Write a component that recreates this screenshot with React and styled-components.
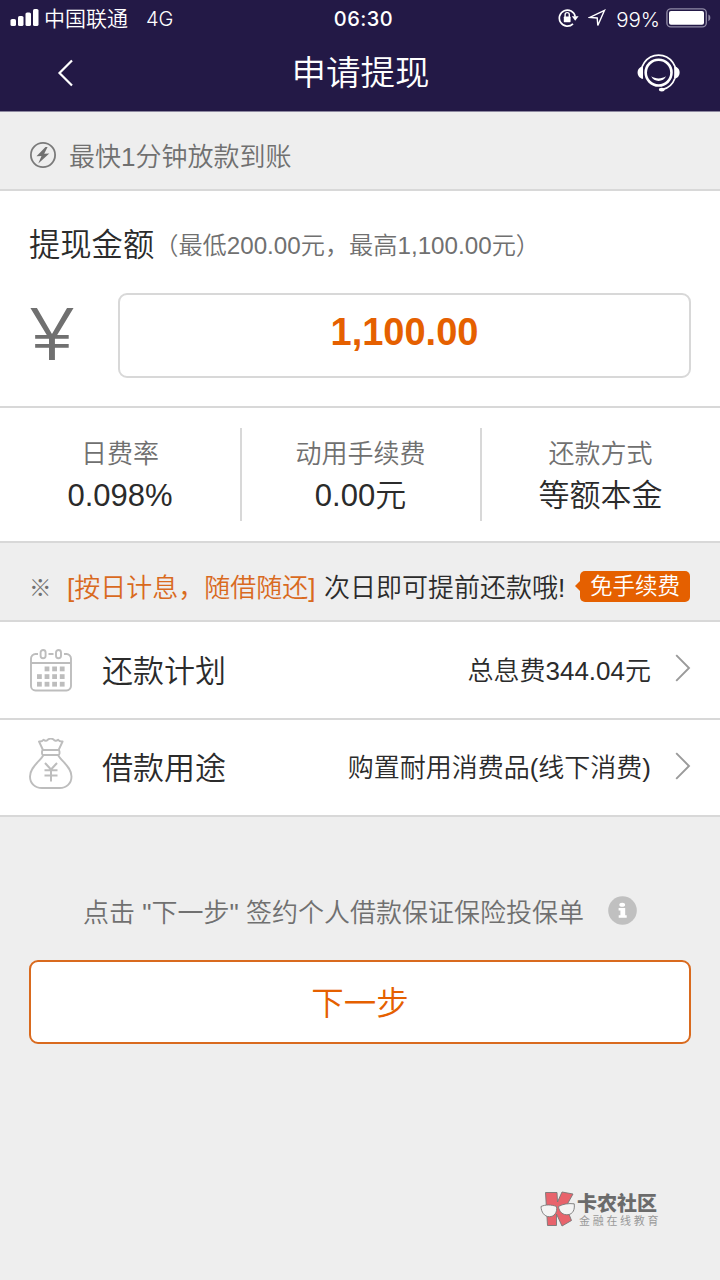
import React from 'react';
import styled, { createGlobalStyle } from 'styled-components';

const colors = {
    navy: '#231946',
    orange: '#e56000',
    orangeText: '#d96a1e',
    line: '#d8d8d8',
    bg: '#eeeeee',
    dark: '#2b2b2b',
    gray: '#707070',
    icon: '#bdbdbd'
};

const stats = [
    { label: '日费率', value: '0.098%' },
    { label: '动用手续费', value: '0.00元' },
    { label: '还款方式', value: '等额本金' }
];

const SignalIcon = () => (
    <svg width="29" height="18" viewBox="0 0 29 18" fill="#fff">
        <rect x="0.5" y="10" width="5.5" height="7" rx="1.6" />
        <rect x="8" y="7" width="5.5" height="10" rx="1.6" />
        <rect x="15.5" y="3.5" width="5.5" height="13.5" rx="1.6" />
        <rect x="23" y="0" width="5.5" height="17" rx="1.6" />
    </svg>
);

const LockIcon = () => (
    <svg width="21" height="20" viewBox="0 0 21 20" fill="none" stroke="#fff" strokeWidth="1.7">
        <path d="M15 15.8A8 8 0 1 1 17.2 8.6" />
        <path d="M13.8 8.2h6.8l-3.4 4.6z" fill="#fff" stroke="none" />
        <path d="M7.1 9V6.7a2.1 2.1 0 0 1 4.2 0V9" strokeWidth="1.4" />
        <rect x="5.8" y="8.6" width="6.8" height="5.6" rx="0.6" fill="#fff" stroke="none" />
    </svg>
);

const LocationIcon = () => (
    <svg width="18" height="18" viewBox="0 0 18 18" fill="none" stroke="#fff" strokeWidth="1.4">
        <path d="M16.5 1.3L1.8 8.4l7.4.6.6 7.5z" strokeLinejoin="miter" />
    </svg>
);

const BatteryIcon = () => (
    <svg width="46" height="20" viewBox="0 0 46 20" fill="none">
        <rect x="0.9" y="0.9" width="39.4" height="18" rx="4" stroke="#8f89a5" strokeWidth="1.4" />
        <rect x="3" y="3" width="35" height="13.8" rx="2" fill="#fff" />
        <path d="M42.4 6.6c2.6 1 2.6 5.6 0 6.6z" fill="#8f89a5" />
    </svg>
);

const BackIcon = () => (
    <svg width="16" height="28" viewBox="0 0 16 28" fill="none" stroke="#fff" strokeWidth="2.2">
        <path d="M15 1.5L2.5 14 15 26.5" />
    </svg>
);

const ServiceIcon = () => (
    <svg width="44" height="38" viewBox="0 0 44 38" fill="none" stroke="#fff">
        <circle cx="21.6" cy="18.6" r="12.9" strokeWidth="2.6" />
        <path d="M5.4 24.5A17.3 17.3 0 1 1 37.8 24.5" strokeWidth="1.7" />
        <path d="M37.8 24.5A17.3 17.3 0 0 1 26 35.4" strokeWidth="1.7" />
        <path d="M6 12.5v12.2C2.6 24.4.6 22 .6 18.6S2.6 12.8 6 12.5z" fill="#fff" stroke="none" />
        <path d="M37.2 12.5v12.2c3.4-.3 5.4-2.7 5.4-6.1s-2-5.800-5.400-6.100z" fill="#fff" stroke="none" />
        <path d="M14.2 22.3c4.4 2.8 10.4 2.8 14.8 0-1.2 3-4.2 4.6-7.4 4.6s-6.2-1.6-7.4-4.6z" fill="#fff" stroke="none" />
        <ellipse cx="24.8" cy="35.6" rx="2.9" ry="1.9" fill="#fff" stroke="none" />
    </svg>
);

const FlashIcon = () => (
    <svg width="26" height="26" viewBox="0 0 26 26">
        <circle cx="13" cy="13" r="12.1" fill="none" stroke="#7a7a7a" strokeWidth="1.8" />
        <path d="M15.5 5L6.5 14.2l5-.3-3.2 7.5L19.3 11.4l-5.100.4L17.600 5z" fill="#707070" />
    </svg>
);

const CalendarIcon = () => (
    <svg width="43" height="43" viewBox="0 0 43 43" fill="none" stroke={colors.icon} strokeWidth="1.9">
        <path d="M8 5H5.5A4.5 4.5 0 0 0 1 9.5V37a4.5 4.5 0 0 0 4.5 4.500h31A4.500 4.500 0 0 0 41 37V9.500A4.500 4.500 0 0 0 36.500 5H34M18.500 5h5M1 14h40" />
        <rect x="10.6" y="1" width="5" height="8.2" rx="2.5" />
        <rect x="26" y="1" width="5" height="8.2" rx="2.5" />
        <g fill={colors.icon} stroke="none">
            {[14.6, 22.2, 29.8].map(x => <rect key={x} x={x} y="17.5" width="4.8" height="4.8" />)}
            {[7, 14.6, 22.2, 29.8].map(x => <rect key={x} x={x} y="25.2" width="4.8" height="4.8" />)}
            {[7, 14.6, 22.2, 29.8].map(x => <rect key={x} x={x} y="32.8" width="4.8" height="4.8" />)}
        </g>
    </svg>
);

const MoneyBagIcon = () => (
    <svg width="44" height="52" viewBox="0 0 44 52" fill="none" stroke={colors.icon} strokeWidth="1.9" strokeLinejoin="round">
        <path d="M14 12L10 3.5c2.200.3 3.400-.2 4.500-1.800 1.800 1.500 3.400 1.300 4.700-.4 1.600-.8 3.600-.8 5.200 0 1.300 1.700 2.900 1.900 4.700.4 1.100 1.600 2.300 2.100 4.500 1.800L29.600 12" />
        <rect x="13" y="12" width="17.5" height="5" rx="1.5" />
        <path d="M14.5 17C11 23.5 1 29 1 38.5 1 45.5 6 50 13 50h17.5c7 0 12-4.5 12-11.5C42.5 29 32.5 23.5 29 17" />
        <path d="M16 25l6 6.5 6-6.5M22 31.5v12M15.500 32.200h13M15.500 37.600h13" strokeWidth="2" />
    </svg>
);

const ArrowIcon = () => (
    <svg width="16" height="28" viewBox="0 0 16 28" fill="none" stroke="#9a9a9a" strokeWidth="1.9">
        <path d="M1.2 1.2L14 14 1.2 26.8" />
    </svg>
);

const InfoIcon = () => (
    <svg width="29" height="29" viewBox="0 0 29 29">
        <circle cx="14.5" cy="14.5" r="14.3" fill="#c0c0c0" />
        <ellipse cx="14.2" cy="8.8" rx="2.9" ry="2" fill="#fff" />
        <path d="M10.6 12h6.6v7.3h1.500v2.500h-8v-2.500h1.700v-4.900h-1.800z" fill="#fff" />
    </svg>
);

const WatermarkLogo = () => (
    <svg width="35" height="36" viewBox="0 0 35 36" stroke="#777" strokeWidth="0.9">
        <path d="M5.5 1.5H17L17.5 11 22 1l11 2-7 12.5 5.5 14-9.5 5.5-5.5-12v11.500H7.500z" fill="#e8636c" />
        <path d="M1 15.5c4.5-2 10-2.1 15.5 0 1 6-2.2 10.2-7.2 10.2C4.3 25.7 1.2 21 1 15.5z" fill="#f4f4f4" />
        <path d="M18.5 15.5c4.500-2.600 10-3.300 15.700-2.700.8 5.800-1.200 10.200-6.200 10.900-5 .6-8.900-2.700-9.500-8.200z" fill="#f4f4f4" />
    </svg>
);

const App = () => (
    <React.Fragment>
        <GlobalStyle />
        <Page>
            <Header>
                <StatusBar>
                    <StatusGroup>
                        <SignalIcon />
                        <Carrier>中国联通</Carrier>
                        <Network>4G</Network>
                    </StatusGroup>
                    <Clock>06:30</Clock>
                    <StatusGroup $end>
                        <LockIcon />
                        <LocationIcon />
                        <Percent>99%</Percent>
                        <BatteryIcon />
                    </StatusGroup>
                </StatusBar>
                <TitleBar>
                    <BackIcon />
                    <Title>申请提现</Title>
                    <ServiceIcon />
                </TitleBar>
            </Header>

            <Notice>
                <FlashIcon />
                <span>最快1分钟放款到账</span>
            </Notice>

            <AmountSection>
                <AmountHeading>
                    <AmountTitle>提现金额</AmountTitle>
                    <AmountRange>（最低200.00元，最高1,100.00元）</AmountRange>
                </AmountHeading>
                <AmountRow>
                    <Currency>¥</Currency>
                    <AmountBox>1,100.00</AmountBox>
                </AmountRow>
            </AmountSection>

            <Stats>
                {stats.map(item => (
                    <Stat key={item.label}>
                        <StatLabel>{item.label}</StatLabel>
                        <StatValue>{item.value}</StatValue>
                    </Stat>
                ))}
            </Stats>

            <Promo>
                <PromoMark>※</PromoMark>
                <PromoHighlight>[按日计息，随借随还]</PromoHighlight>
                <PromoText>次日即可提前还款哦!</PromoText>
                <Badge>免手续费</Badge>
            </Promo>

            <Row>
                <RowIcon $padding="4px 0 0 1px"><CalendarIcon /></RowIcon>
                <RowTitle>还款计划</RowTitle>
                <RowValue>总息费344.04元</RowValue>
                <ArrowIcon />
            </Row>
            <Row>
                <RowIcon $padding="0 0 3px"><MoneyBagIcon /></RowIcon>
                <RowTitle>借款用途</RowTitle>
                <RowValue>购置耐用消费品(线下消费)</RowValue>
                <ArrowIcon />
            </Row>

            <Tip>
                <span>点击 "下一步" 签约个人借款保证保险投保单</span>
                <InfoIcon />
            </Tip>
            <NextButton>下一步</NextButton>

            <Watermark>
                <WatermarkLogo />
                <div>
                    <WatermarkName>卡农社区</WatermarkName>
                    <WatermarkSlogan>金融在线教育</WatermarkSlogan>
                </div>
            </Watermark>
        </Page>
    </React.Fragment>
);

export default App;

const GlobalStyle = createGlobalStyle`
    * {
        box-sizing: border-box;
    }
    body {
        margin: 0;
        background-color: ${colors.bg};
        font-family: "Liberation Sans", "Noto Sans CJK SC", sans-serif;
        font-weight: 350;
    }
    svg {
        display: block;
        flex-shrink: 0;
    }
`

const Page = styled.div`
    display: flex;
    flex-direction: column;
    width: 720px;
    height: 1280px;
    overflow: hidden;
    white-space: nowrap;
    color: ${colors.dark};
    background-color: ${colors.bg};
`

const Header = styled.header`
    height: 112px;
    color: #fff;
    background-color: ${colors.navy};
    border-bottom: 1px solid #8d88a0;
`

const StatusBar = styled.div`
    display: grid;
    grid-template-columns: 1fr auto 1fr;
    align-items: center;
    height: 36px;
    padding: 0 8px 0 10px;
`

const StatusGroup = styled.div`
    display: flex;
    align-items: center;
    justify-content: ${props => props.$end ? 'flex-end' : 'flex-start'};
    gap: ${props => props.$end ? '9px' : '5px'};
`

const Carrier = styled.span`
    padding-top: 1px;
    font-size: 21px;
    line-height: 35px;
`

const Network = styled.span`
    margin-left: 13px;
    padding-top: 2px;
    font-family: Inter, sans-serif;
    font-size: 20px;
    font-weight: 350;
`

const Clock = styled.span`
    padding: 2px 0 0 5px;
    font-family: Inter, sans-serif;
    font-size: 20px;
    font-weight: 550;
    letter-spacing: 0.5px;
`

const Percent = styled.span`
    margin: 0 -3px 0 1px;
    padding-top: 2px;
    font-family: Inter, sans-serif;
    font-size: 20.5px;
    font-weight: 350;
`

const TitleBar = styled.div`
    display: grid;
    grid-template-columns: 44px 1fr 44px;
    align-items: center;
    height: 74px;
    padding: 0 39px 0 57px;
`

const Title = styled.h1`
    margin: 0;
    padding-right: 17px;
    font-size: 34.5px;
    font-weight: inherit;
    line-height: 74px;
    text-align: center;
`

const Notice = styled.div`
    display: flex;
    align-items: center;
    gap: 13px;
    height: 79px;
    padding: 8px 30px 0;
    color: ${colors.gray};
    border-bottom: 2px solid ${colors.line};
    font-size: 26px;
    line-height: 36px;
    span {
        padding-top: 4px;
    }
`

const AmountSection = styled.section`
    height: 217px;
    padding: 32px 29px 0;
    background-color: #fff;
    border-bottom: 2px solid ${colors.line};
`

const AmountHeading = styled.div`
    display: flex;
    align-items: center;
    height: 46px;
    margin-bottom: 24px;
`

const AmountTitle = styled.span`
    font-size: 31.3px;
    line-height: 44px;
`

const AmountRange = styled.span`
    padding-bottom: 1px;
    color: ${colors.gray};
    font-size: 24.2px;
    line-height: 42px;
`

const AmountRow = styled.div`
    display: flex;
    align-items: center;
    justify-content: space-between;
`

const Currency = styled.span`
    width: 46px;
    padding-bottom: 4px;
    color: ${colors.gray};
    font-family: Inter, sans-serif;
    font-size: 72px;
    font-weight: 300;
    line-height: 81px;
    text-align: center;
    transform: scaleX(1.18);
`

const AmountBox = styled.div`
    width: 573px;
    height: 85px;
    color: ${colors.orange};
    border: 2px solid ${colors.line};
    border-radius: 9px;
    font-size: 38px;
    font-weight: 700;
    line-height: 74px;
    text-align: center;
`

const Stats = styled.section`
    display: grid;
    grid-template-columns: repeat(3, 1fr);
    height: 135px;
    padding: 20px 0;
    background-color: #fff;
    border-bottom: 2px solid ${colors.line};
`

const Stat = styled.div`
    display: flex;
    flex-direction: column;
    align-items: center;
    padding-top: 6px;
    & + & {
        padding-right: 1px;
        border-left: 2px solid ${colors.line};
    }
`

const StatLabel = styled.span`
    color: ${colors.gray};
    font-size: 26px;
    line-height: 40px;
`

const StatValue = styled.span`
    font-size: 31px;
    line-height: 44px;
`

const Promo = styled.div`
    display: flex;
    align-items: center;
    height: 79px;
    padding: 8px 30px 0 29px;
    border-bottom: 2px solid ${colors.line};
    font-size: 26px;
`

const PromoMark = styled.span`
    width: 38px;
    color: ${colors.gray};
    font-size: 22.5px;
    font-weight: 700;
`

const PromoHighlight = styled.span`
    width: 257px;
    color: ${colors.orangeText};
`

const PromoText = styled.span`
    flex: 1;
`

const Badge = styled.span`
    position: relative;
    width: 110px;
    height: 31px;
    margin-top: 1px;
    color: #fff;
    background-color: ${colors.orange};
    border-radius: 5px;
    font-size: 22.5px;
    line-height: 32px;
    text-align: center;
    &::before {
        content: '';
        position: absolute;
        top: 10px;
        left: -5px;
        border: 5px solid transparent;
        border-left: 0;
        border-right-color: ${colors.orange};
    }
`

const Row = styled.div`
    display: flex;
    align-items: center;
    height: 97.5px;
    padding: 0 29px 3px;
    background-color: #fff;
    border-bottom: 2px solid ${colors.line};
`

const RowIcon = styled.span`
    width: 73px;
    padding: ${props => props.$padding};
`

const RowTitle = styled.span`
    flex: 1;
    font-size: 31px;
`

const RowValue = styled.span`
    margin-right: 24px;
    font-size: 26px;
`

const Tip = styled.div`
    display: flex;
    align-items: center;
    justify-content: center;
    gap: 24px;
    height: 40px;
    margin-top: 73px;
    color: ${colors.gray};
    font-size: 26px;
`

const NextButton = styled.button`
    height: 84px;
    margin: 30px 29px 0;
    padding: 0 0 4px;
    color: ${colors.orange};
    background-color: #fff;
    border: 2px solid ${colors.orangeText};
    border-radius: 9px;
    font-family: inherit;
    font-size: 32.5px;
    font-weight: inherit;
`

const Watermark = styled.div`
    display: flex;
    align-items: center;
    gap: 2px;
    margin: 147px 0 0 540px;
    color: #6b6b6b;
`

const WatermarkName = styled.div`
    padding-top: 1px;
    font-size: 20px;
    font-weight: 900;
    line-height: 23px;
`

const WatermarkSlogan = styled.div`
    padding-left: 2px;
    color: #999;
    font-size: 11px;
    font-weight: 400;
    line-height: 11px;
    letter-spacing: 2.7px;
`
